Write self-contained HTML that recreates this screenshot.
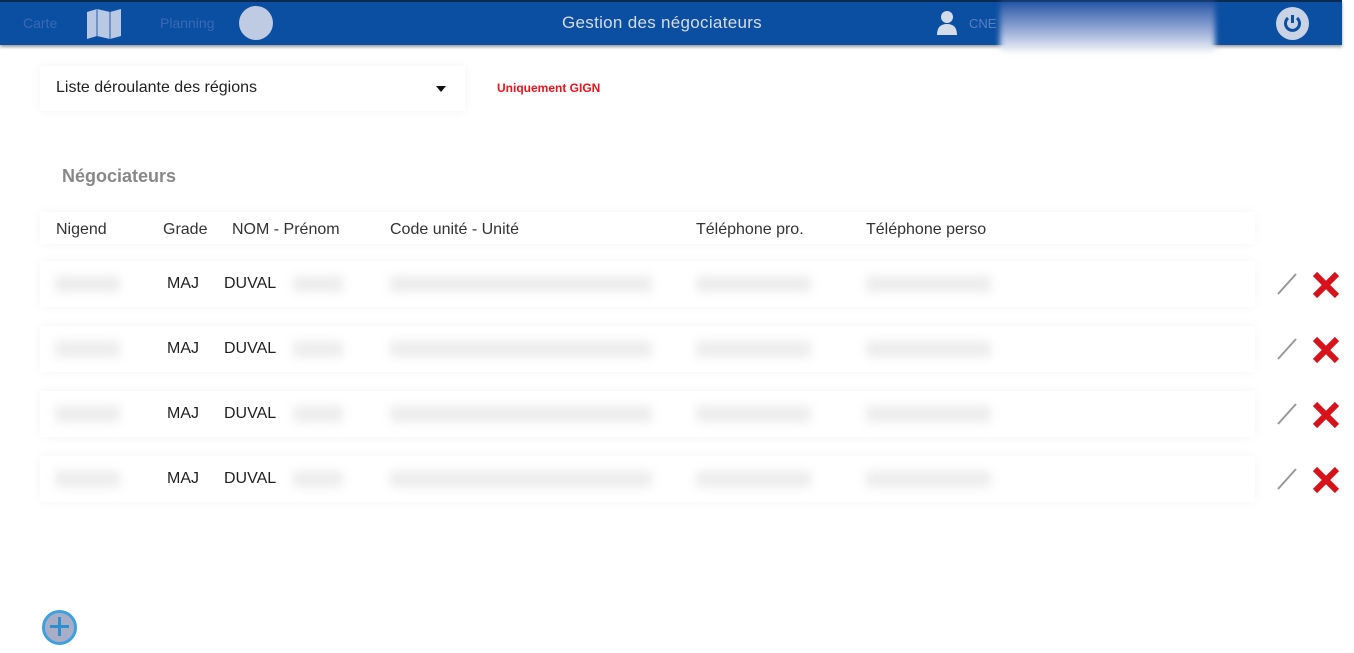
<!DOCTYPE html>
<html><head><meta charset="utf-8"><style>
*{margin:0;padding:0;box-sizing:border-box}
body{width:1354px;height:653px;background:#fff;font-family:"Liberation Sans",sans-serif;position:relative;overflow:hidden}
.hdr{position:absolute;left:0;top:0;width:1342px;height:45px;background:#0b4fa2;border-top:2px solid #0a2a50;box-shadow:0 2px 3px #999}
.a{position:absolute}
.blur{position:absolute;background:#ececec;filter:blur(5px);height:16px}
.row{position:absolute;left:40px;width:1215px;height:46px;box-shadow:0 0 10px rgba(0,0,0,.045);background:#fff}
.t{position:absolute;font-size:16px;color:#222}
.h{position:absolute;font-size:16px;color:#333;top:221px}
</style></head><body>
<div class="hdr">
 <div class="a" style="left:23px;top:13px;font-size:14px;color:#3a68b8">Carte</div>
 <svg class="a" style="left:86px;top:7px" width="36" height="30" viewBox="0 0 36 30"><path d="M1 3 L11 0 L24 3 L35 0 L35 27 L24 30 L11 27 L1 30Z" fill="#b9c8e3"/><path d="M11 0 V27 M24 3 V30" stroke="#6f92c8" stroke-width="2"/></svg>
 <div class="a" style="left:160px;top:13px;font-size:14px;color:#3a68b8">Planning</div>
 <div class="a" style="left:239px;top:4px;width:34px;height:34px;border-radius:50%;background:#bfcbe2"></div>
 <div class="a" style="left:562px;top:11px;font-size:17px;color:#d6dbe5;letter-spacing:.3px">Gestion des négociateurs</div>
 <svg class="a" style="left:936px;top:9px" width="22" height="24" viewBox="0 0 22 24"><circle cx="11" cy="6" r="6" fill="#d4dcea"/><path d="M1 24 Q1 13 11 13 Q21 13 21 24Z" fill="#d4dcea"/></svg>
 <div class="a" style="left:969px;top:14px;font-size:13px;color:#5a7fc0">CNE</div>
 <div class="a" style="left:1000px;top:0px;width:215px;height:50px;background:linear-gradient(#2a58a8,#9db0d8 60%,#f2f4fa);filter:blur(3px)"></div>
 <div class="a" style="left:1276px;top:5px;width:33px;height:33px;border-radius:50%;background:#c9d3e4"></div>
 <svg class="a" style="left:1281px;top:10px" width="23" height="23" viewBox="0 0 23 23"><path d="M7 6 A7 7 0 1 0 16 6" fill="none" stroke="#0b4fa2" stroke-width="3"/><path d="M11.5 3 V11" stroke="#0b4fa2" stroke-width="3"/></svg>
</div>
<div class="a" style="left:40px;top:66px;width:425px;height:45px;box-shadow:0 0 10px rgba(0,0,0,.05)"></div>
<div class="a" style="left:56px;top:79px;font-size:16px;color:#222">Liste déroulante des régions</div>
<div class="a" style="left:436px;top:86px;border-left:5px solid transparent;border-right:5px solid transparent;border-top:6px solid #111"></div>
<div class="a" style="left:497px;top:81px;font-size:12px;font-weight:bold;color:#e8131c">Uniquement GIGN</div>
<div class="a" style="left:62px;top:166px;font-size:18px;font-weight:bold;color:#888">Négociateurs</div>
<div class="a" style="left:40px;top:212px;width:1215px;height:32px;box-shadow:0 0 10px rgba(0,0,0,.045)"></div>
<div class="h" style="left:56px">Nigend</div>
<div class="h" style="left:163px">Grade</div>
<div class="h" style="left:232px">NOM - Prénom</div>
<div class="h" style="left:390px">Code unité - Unité</div>
<div class="h" style="left:696px">Téléphone pro.</div>
<div class="h" style="left:866px">Téléphone perso</div>

<div class="row" style="top:261px"></div><div class="row" style="top:326px"></div><div class="row" style="top:391px"></div><div class="row" style="top:456px"></div>

<div id="r"></div>
<script>
var ys=[284,349,414,479],h='';
ys.forEach(function(y){
h+='<div class="blur" style="left:55px;top:'+(y-8)+'px;width:65px"></div>';
h+='<div class="t" style="left:167px;top:'+(y-9)+'px">MAJ</div>';
h+='<div class="t" style="left:224px;top:'+(y-9)+'px">DUVAL</div>';
h+='<div class="blur" style="left:293px;top:'+(y-8)+'px;width:50px"></div>';
h+='<div class="blur" style="left:390px;top:'+(y-8)+'px;width:262px"></div>';
h+='<div class="blur" style="left:696px;top:'+(y-8)+'px;width:115px"></div>';
h+='<div class="blur" style="left:866px;top:'+(y-8)+'px;width:125px"></div>';
h+='<svg class="a" style="left:1276px;top:'+(y-12)+'px" width="22" height="24"><path d="M2 22 L20 2" stroke="#999" stroke-width="2"/></svg>';
h+='<svg class="a" style="left:1311px;top:'+(y-14)+'px" width="30" height="30"><path d="M4 4 L26 26 M26 4 L4 26" stroke="#d8121b" stroke-width="6"/></svg>';
});
document.getElementById('r').innerHTML=h;
</script>
<div class="a" style="left:42px;top:610px;width:35px;height:35px;border-radius:50%;background:#a9aec6;border:3px solid #3ea0e0"></div>
<div class="a" style="left:50px;top:625px;width:19px;height:3px;background:#2d8fd0"></div>
<div class="a" style="left:58px;top:617px;width:3px;height:19px;background:#2d8fd0"></div>
</body></html>
